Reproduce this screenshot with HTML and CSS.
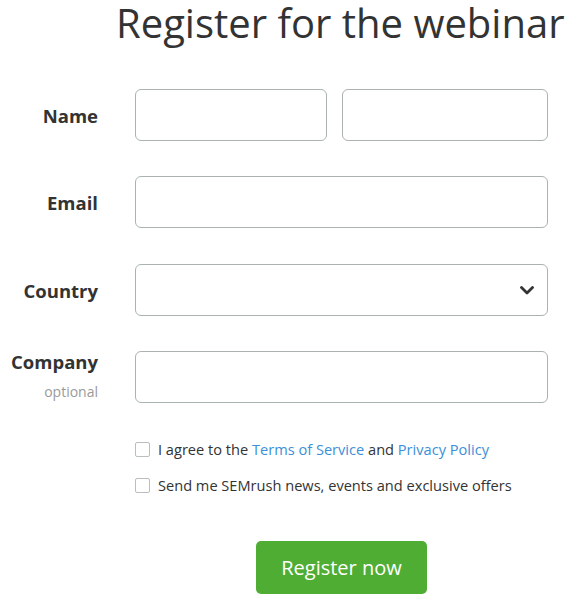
FILE: index.html
```html
<!DOCTYPE html>
<html>
<head>
<meta charset="utf-8">
<link rel="stylesheet" href="styles.css">
</head>
<body>
<div class="page">
  <h1 class="title">Register for the webinar</h1>
  <form class="form">
    <div class="row">
      <label class="label">Name</label>
      <div class="fields two">
        <input class="input" type="text">
        <input class="input" type="text">
      </div>
    </div>
    <div class="row row-wide">
      <label class="label">Email</label>
      <div class="fields">
        <input class="input" type="text">
      </div>
    </div>
    <div class="row">
      <label class="label">Country</label>
      <div class="fields">
        <div class="select">
          <svg class="chevron" width="14" height="9" viewBox="0 0 14 9"><path d="M1.5 1.5 L7 7 L12.5 1.5" fill="none" stroke="#333" stroke-width="2.8" stroke-linecap="round" stroke-linejoin="round"/></svg>
        </div>
      </div>
    </div>
    <div class="row row-top">
      <div class="label label-stack">
        <span>Company</span>
        <span class="optional">optional</span>
      </div>
      <div class="fields">
        <input class="input" type="text">
      </div>
    </div>
    <div class="checks">
      <div class="check"><span class="box"></span><span>I agree to the <a class="link">Terms of Service</a> and <a class="link">Privacy Policy</a></span></div>
      <div class="check"><span class="box"></span><span>Send me SEMrush news, events and exclusive offers</span></div>
    </div>
    <div class="actions">
      <button class="btn" type="button">Register now</button>
    </div>
  </form>
</div>
</body>
</html>
```

FILE: styles.css
```css
html, body {
  margin: 0;
  padding: 0;
  background: #fff;
}
body {
  font-family: "Open Sans", "Noto Sans", sans-serif;
  color: #333;
}
.page {
  width: 580px;
}
.title {
  margin: 0 0 0 116px;
  font-size: 40px;
  font-weight: 400;
  line-height: 46px;
  white-space: nowrap;
  color: #333;
}
.form {
  margin-top: 43px;
  display: flex;
  flex-direction: column;
}
.row {
  display: grid;
  grid-template-columns: 98px 413px;
  column-gap: 37px;
  align-items: center;
  height: 52px;
  margin-bottom: 35px;
}
.row-wide {
  margin-bottom: 36px;
}
.row-top {
  align-items: start;
}
.label {
  text-align: right;
  font-weight: 700;
  font-size: 18.5px;
  color: #333;
  white-space: nowrap;
}
.label-stack {
  display: flex;
  flex-direction: column;
  align-items: flex-end;
  line-height: 22px;
}
.optional {
  font-weight: 400;
  font-size: 14px;
  color: #9a9a9a;
  line-height: 22px;
  margin-top: 8px;
}
.fields {
  display: flex;
  gap: 15px;
}
.fields.two .input:first-child {
  flex: 0 0 192px;
}
.input, .select {
  box-sizing: border-box;
  height: 52px;
  width: 100%;
  flex: 1;
  border: 1px solid #aab2b2;
  border-radius: 6px;
  background: #fff;
  margin: 0;
  padding: 0 14px;
  font: inherit;
}
.select {
  display: flex;
  align-items: center;
  justify-content: flex-end;
  padding-right: 13px;
}
.checks {
  margin-top: 1px;
  margin-left: 135px;
  display: flex;
  flex-direction: column;
  gap: 16px;
}
.check {
  display: flex;
  align-items: center;
  gap: 8px;
  font-size: 14.6px;
  line-height: 20px;
  color: #333;
}
.box {
  box-sizing: border-box;
  width: 15px;
  height: 15px;
  border: 1px solid #b9bfbf;
  border-radius: 2px;
  background: #fff;
  flex: 0 0 15px;
}
.link {
  color: #3c8fd8;
}
.actions {
  margin-left: 135px;
  width: 413px;
  display: flex;
  justify-content: center;
  margin-top: 46px;
}
.btn {
  width: 171px;
  height: 53px;
  background: #4fad34;
  color: #fff;
  border: none;
  border-radius: 5px;
  font-family: inherit;
  font-size: 20px;
  font-weight: 400;
  padding: 0;
}
```
